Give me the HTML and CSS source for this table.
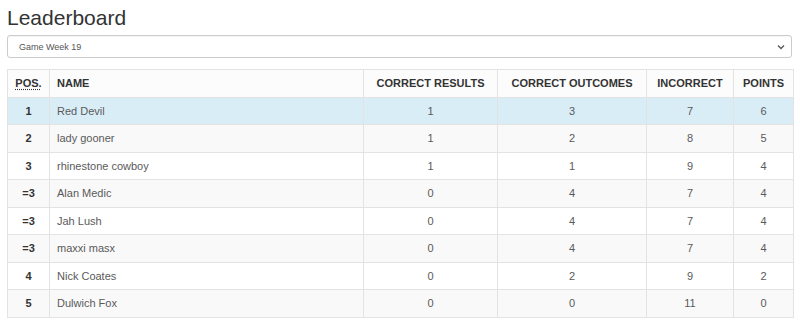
FILE: index.html
```html
<!DOCTYPE html>
<html>
<head>
<meta charset="utf-8">
<link rel="stylesheet" href="styles.css">
</head>
<body>
<div class="page">
  <h1 class="title">Leaderboard</h1>
  <div class="select">
    <span class="select-text">Game Week 19</span>
    <svg class="chev" width="8" height="6" viewBox="0 0 8 6"><path d="M1 1.5 L4 4.5 L7 1.5" fill="none" stroke="#555" stroke-width="1.3"/></svg>
  </div>
  <table class="board">
    <colgroup>
      <col class="w-pos"><col class="w-name"><col class="w-res"><col class="w-out"><col class="w-inc"><col class="w-pts">
    </colgroup>
    <thead>
      <tr>
        <th class="c"><abbr title="Position">POS.</abbr></th>
        <th class="l">NAME</th>
        <th class="c">CORRECT RESULTS</th>
        <th class="c">CORRECT OUTCOMES</th>
        <th class="c">INCORRECT</th>
        <th class="c">POINTS</th>
      </tr>
    </thead>
    <tbody>
      <tr class="info"><td class="pos">1</td><td>Red Devil</td><td class="c">1</td><td class="c">3</td><td class="c">7</td><td class="c">6</td></tr>
      <tr class="alt"><td class="pos">2</td><td>lady gooner</td><td class="c">1</td><td class="c">2</td><td class="c">8</td><td class="c">5</td></tr>
      <tr><td class="pos">3</td><td>rhinestone cowboy</td><td class="c">1</td><td class="c">1</td><td class="c">9</td><td class="c">4</td></tr>
      <tr class="alt"><td class="pos">=3</td><td>Alan Medic</td><td class="c">0</td><td class="c">4</td><td class="c">7</td><td class="c">4</td></tr>
      <tr><td class="pos">=3</td><td>Jah Lush</td><td class="c">0</td><td class="c">4</td><td class="c">7</td><td class="c">4</td></tr>
      <tr class="alt"><td class="pos">=3</td><td>maxxi masx</td><td class="c">0</td><td class="c">4</td><td class="c">7</td><td class="c">4</td></tr>
      <tr><td class="pos">4</td><td>Nick Coates</td><td class="c">0</td><td class="c">2</td><td class="c">9</td><td class="c">2</td></tr>
      <tr class="alt"><td class="pos">5</td><td>Dulwich Fox</td><td class="c">0</td><td class="c">0</td><td class="c">11</td><td class="c">0</td></tr>
    </tbody>
  </table>
</div>
</body>
</html>
```
FILE: styles.css
```css
html, body {
  margin: 0;
  padding: 0;
  background: #fff;
}
.page {
  padding: 6px 8px 0 7px;
  font-family: "Liberation Sans", Arial, sans-serif;
  color: #333;
}
.title {
  margin: 0;
  font-size: 21px;
  font-weight: normal;
  line-height: 24px;
  color: #333;
}
.select {
  margin-top: 5px;
  height: 21px;
  border: 1px solid #ccc;
  border-radius: 3px;
  display: flex;
  align-items: center;
  justify-content: space-between;
  padding: 0 6px 0 11px;
  box-shadow: inset 0 1px 1px rgba(0,0,0,0.05);
}
.select-text {
  font-size: 9px;
  color: #555;
}
.chev { display: block; }
.board {
  margin-top: 11px;
  width: 785px;
  border-collapse: collapse;
  table-layout: fixed;
  font-size: 11px;
  color: #5a5a5a;
}
.w-pos { width: 42px; }
.w-name { width: 314px; }
.w-res { width: 134px; }
.w-out { width: 149px; }
.w-inc { width: 87px; }
.w-pts { width: 60px; }
.board th, .board td {
  border: 1px solid #e3e3e3;
  padding: 5px 7px;
  line-height: 16.5px;
  white-space: nowrap;
}
.board th {
  font-weight: bold;
  color: #333;
  background: #fcfcfc;
}
.board th.l { text-align: left; }
.c { text-align: center; }
.board abbr {
  text-decoration: underline dotted;
  text-underline-offset: 2px;
  cursor: help;
}
.board td.pos {
  text-align: center;
  font-weight: bold;
  color: #333;
}
.board tr.alt td { background: #f9f9f9; }
.board tr.info td { background: #d9edf7; }
```
